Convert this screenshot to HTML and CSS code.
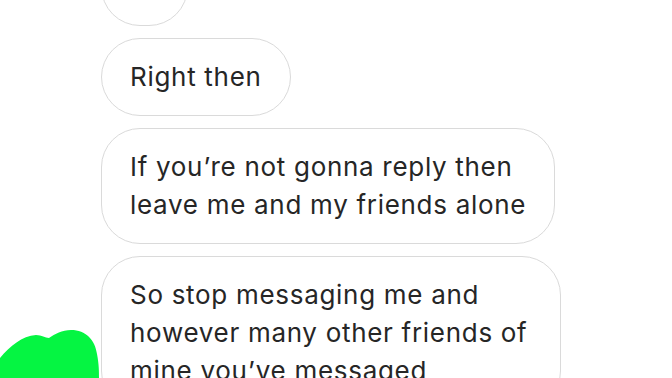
FILE: index.html
```
<!DOCTYPE html>
<html lang="en">
<head>
    <meta charset="UTF-8">
    <meta name="viewport" content="width=device-width, initial-scale=1.0">
    <title>Messages</title>
    <link rel="stylesheet" href="styles.css">
</head>
<body>
    <main class="thread">
        <div class="messages">
            <!-- previous message, mostly scrolled out of view -->
            <div class="bubble short">&nbsp;</div>
            <div class="bubble">Right then</div>
            <div class="bubble">If you’re not gonna reply then<br>leave me and my friends alone</div>
            <div class="bubble wide">So stop messaging me and<br>however many other friends of<br>mine you’ve messaged</div>
        </div>

        <!-- scribbled-out avatar -->
        <svg class="scribble" width="100" height="50" viewBox="0 0 100 50">
            <path d="M0 30 C10 18 22 8 36 7 C42 7 45 10 49 10 C55 6 62 2 71 2 C86 2 95 12 97 26 C99 36 99 44 99 50 L0 50 Z" fill="#05f542"/>
        </svg>
    </main>
</body>
</html>
```

FILE: styles.css
```
* {
    margin: 0;
    padding: 0;
    box-sizing: border-box;
}

body {
    background-color: #fff;
    color: #262626;
    font-family: Inter, 'Liberation Sans', Arial, sans-serif;
    overflow: hidden;
}

.thread {
    position: relative;
    width: 672px;
    height: 378px;
    padding-left: 101px;
    overflow: hidden;
}

.messages {
    display: flex;
    flex-direction: column;
    align-items: flex-start;
    gap: 12px;
    margin-top: -52px;
}

.bubble {
    border: 1px solid #dadada;
    border-radius: 39px;
    padding: 19px 28px;
    font-size: 26px;
    line-height: 38px;
    letter-spacing: 0.7px;
    white-space: nowrap;
}

.bubble.short {
    width: 87px;
}

.bubble.wide {
    width: 460px;
}

.scribble {
    position: absolute;
    left: 0;
    bottom: 0;
}
```
